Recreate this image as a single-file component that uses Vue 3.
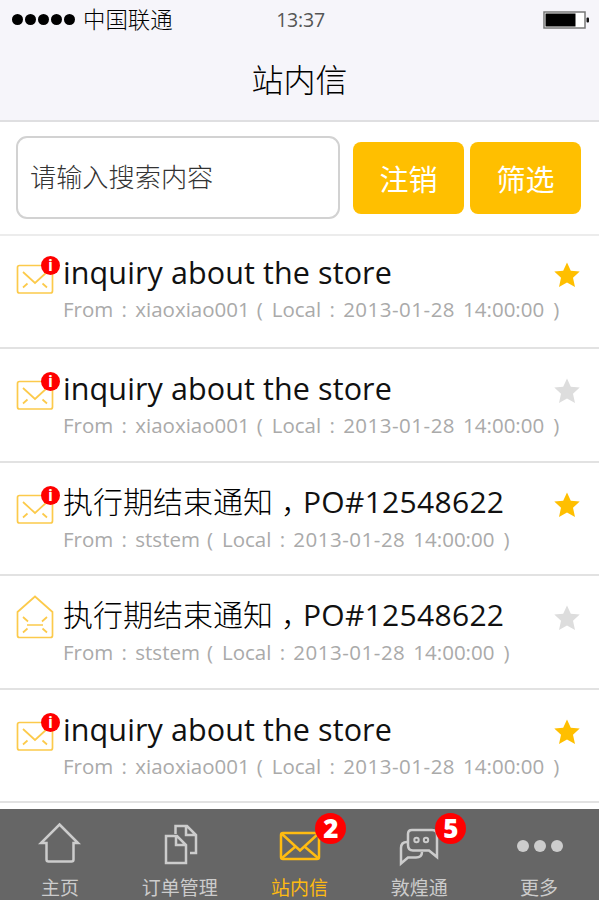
<template>
  <div class="page">
    <header class="header">
      <div class="status-bar">
        <div class="carrier">
          <span class="signal"><i v-for="n in 5" :key="n"></i></span>
          <span>中国联通</span>
        </div>
        <div class="time">13:37</div>
        <svg class="battery" width="46" height="18" viewBox="0 0 46 18">
          <rect x="1" y="1" width="41" height="16" fill="#fff" stroke="#777" stroke-width="1.5" />
          <rect x="2.5" y="2.5" width="30" height="13" fill="#000" />
          <rect x="43.5" y="6.5" width="2.5" height="5" rx="1" fill="#111" />
        </svg>
      </div>
      <h1>站内信</h1>
    </header>

    <div class="search">
      <input v-model="keyword" type="text" placeholder="请输入搜索内容">
      <button class="btn" @click="keyword = ''">注销</button>
      <button class="btn">筛选</button>
    </div>

    <ul class="list">
      <li v-for="(item, index) in messages" :key="index" class="item">
        <div class="mail">
          <svg v-if="item.read" width="38" height="46" viewBox="0 0 38 46">
            <path d="M1.5 14 L19 -1.5 L36.5 14 V37.500 Q36.500 39.500 34.500 39.500 H3.500 Q1.500 39.500 1.500 37.500 Z M7 19 L12 23.500 M31 19 L26 23.500 M11 27 H27 M7 34.500 L11.500 30.500 M31 34.500 L26.500 30.500" />
          </svg>
          <svg v-else width="38" height="46" viewBox="0 0 38 46">
            <rect x="1.500" y="10.500" width="35" height="27.500" rx="2" />
            <path d="M7 17 L19 28 L31 17 M7 32.500 L11.500 28.500 M31 32.500 L26.500 28.500" />
          </svg>
          <span v-if="!item.read" class="mark">i</span>
        </div>
        <div class="text">
          <div v-if="item.order" class="title cn">{{ item.title }}<span class="comma">，</span><span class="order">{{ item.order }}</span></div>
          <div v-else class="title">{{ item.title }}</div>
          <div class="info">
            <span>From</span>
            <span class="colon">:</span>
            <span>{{ item.from }}</span>
            <span class="bracket">(</span>
            <span>Local</span>
            <span class="colon">:</span>
            <span class="date">{{ item.date }}</span>
            <span class="clock">{{ item.clock }}</span>
            <span>)</span>
          </div>
        </div>
        <svg class="star" :class="{ on: item.star }" width="26" height="26" viewBox="0 0 26 26" @click="item.star = !item.star">
          <path d="M13 .5 L16.800 8.700 L25.700 9.600 L19 15.700 L21 25 L13 20.500 L5 25 L7 15.700 L.3 9.600 L9.200 8.700 Z" />
        </svg>
      </li>
    </ul>

    <nav class="tabs">
      <div
          v-for="tab in tabs"
          :key="tab.name"
          class="tab"
          :class="{ active: current === tab.name }"
          @click="current = tab.name"
      >
        <div class="tab-icon">
          <svg width="42" height="44" viewBox="0 0 42 44">
            <path v-for="d in tab.paths" :key="d" :d="d" />
            <circle v-for="c in tab.eyes" :key="c" class="eye" :cx="c" cy="18" r="2.2" />
            <circle v-for="c in tab.dots" :key="c" class="dot" :cx="c" cy="24" r="6" />
          </svg>
          <span v-if="tab.count" class="count">{{ tab.count }}</span>
        </div>
        <span class="tab-name">{{ tab.name }}</span>
      </div>
    </nav>
  </div>
</template>

<script setup>
import { ref } from 'vue'

const keyword = ref('')
const current = ref('站内信')

const time = { date: '2013-01-28', clock: '14:00:00' }

// 消息列表
const messages = ref([
  { title: 'inquiry about the store', from: 'xiaoxiao001', ...time, star: true, read: false },
  { title: 'inquiry about the store', from: 'xiaoxiao001', ...time, star: false, read: false },
  { title: '执行期结束通知', order: 'PO#12548622', from: 'ststem', ...time, star: true, read: false },
  { title: '执行期结束通知', order: 'PO#12548622', from: 'ststem', ...time, star: false, read: true },
  { title: 'inquiry about the store', from: 'xiaoxiao001', ...time, star: true, read: false }
])

// 底部菜单
const tabs = [
  { name: '主页', paths: ['M20.500 2.500 L39 21 H34.500 V37.500 Q34.500 39.500 32.500 39.500 H9.500 Q7.500 39.500 7.500 37.500 V21 H2 Z'] },
  {
    name: '订单管理',
    paths: [
      'M7 14 H18 L27 23 V41 H7 Z M17 14 V23 H27',
      'M16.500 12 V4 H28 L37 13 V31 H31 M27 4 V13 H37'
    ]
  },
  { name: '站内信', count: 2, paths: ['M5 11 H39 Q41 11 41 13 V35 Q41 37 39 37 H5 Q3 37 3 35 V13 Q3 11 5 11 Z', 'M4 12 L22 28.500 L40 12 M4 36 L17.500 24.500 M40 36 L26.500 24.500'] },
  {
    name: '敦煌通',
    count: 5,
    eyes: [18.5, 28],
    paths: [
      'M14 8 H34 Q39 8 39 13 V35 L31 28.500 H15 Q10 28.500 10 23 V12 Q10 8 14 8 Z',
      'M9 20 Q3 20 3 26 V41.500 L10 35.500 H18 Q24 35.500 24 30'
    ]
  },
  { name: '更多', dots: [5, 22, 39], paths: [] }
]
</script>

<style>
body {
  background: #fff;
}
</style>

<style scoped>
.page {
  height: 900px;
  display: flex;
  flex-direction: column;
  overflow: hidden;
  font-family: "Open Sans", "Noto Sans CJK SC", sans-serif;
  background: #fff;
}

.header {
  height: 122px;
  box-sizing: border-box;
  background: #f6f5fa;
  border-bottom: 2px solid #dfdfe1;
}

.status-bar {
  height: 39px;
  padding: 0 10px 0 12px;
  display: grid;
  grid-template-columns: 1fr auto 1fr;
  align-items: center;
  font-size: 22.4px;
  font-weight: 300;
}

.carrier {
  display: flex;
  align-items: center;
  gap: 8px;
  line-height: 36px;
}

.signal {
  display: flex;
  gap: 2px;
}

.signal i {
  width: 11px;
  height: 11px;
  border-radius: 50%;
  background: #000;
}

.time {
  font-size: 19.5px;
  font-weight: 400;
  color: #555;
  letter-spacing: -0.2px;
}

.battery {
  justify-self: end;
}

h1 {
  margin: 0;
  line-height: 81px;
  text-align: center;
  font-size: 32px;
  font-weight: 300;
}

.search {
  height: 114px;
  box-sizing: border-box;
  display: flex;
  align-items: center;
  padding: 0 18px 2px 16px;
  border-bottom: 2px solid #ececec;
}

input {
  width: 324px;
  height: 83px;
  box-sizing: border-box;
  margin-right: 13px;
  padding: 0 12px 3px;
  border: 2px solid #d2d2d2;
  border-radius: 11px;
  outline: none;
  font: 300 26.2px "Noto Sans CJK SC", sans-serif;
}

input::placeholder {
  color: #333;
}

.btn {
  width: 111px;
  height: 72px;
  margin-top: 1px;
  padding: 0;
  border: none;
  border-radius: 8px;
  background: #ffbf00;
  color: #fff;
  font: 400 29px "Noto Sans CJK SC", sans-serif;
}

.btn + .btn {
  margin-left: 6px;
}

.list {
  flex: 1;
  margin: 0;
  padding: 0;
  list-style: none;
}

.item {
  height: 113.5px;
  box-sizing: border-box;
  display: flex;
  align-items: flex-start;
  padding: 22px 19px 0 16px;
  border-bottom: 2px solid #e2e2e2;
}

.item:first-child {
  height: 113px;
  padding-top: 19px;
}

.mail {
  position: relative;
  flex-shrink: 0;
  width: 38px;
  height: 46px;
  margin-right: 9px;
}

.mail svg {
  display: block;
  overflow: visible;
  fill: none;
  stroke: #fcca4b;
  stroke-width: 1.7;
}

.mark {
  position: absolute;
  top: 1px;
  right: -6px;
  width: 19px;
  height: 19px;
  border-radius: 50%;
  background: #f00;
  color: #fff;
  font-size: 16px;
  font-weight: 700;
  line-height: 18px;
  text-align: center;
}

.text {
  flex: 1;
  min-width: 0;
  white-space: nowrap;
}

.title {
  height: 36px;
  line-height: 34px;
  font-size: 30.5px;
  font-weight: 400;
  letter-spacing: 0.1px;
  color: #111;
}

.title.cn {
  font-size: 30px;
  font-weight: 300;
  letter-spacing: 0;
  color: #000;
}

.comma {
  padding-left: 8px;
  letter-spacing: -8px;
}

.order {
  font-weight: 400;
  letter-spacing: 0.3px;
  color: #111;
}

.info {
  display: flex;
  height: 38px;
  line-height: 36px;
  font-size: 20.5px;
  font-weight: 400;
  color: #aaa;
}

.info span {
  flex-shrink: 0;
}

.colon {
  width: 22px;
  text-align: center;
}

.bracket {
  width: 15px;
  padding-left: 7px;
}

.date {
  letter-spacing: 0.5px;
}

.clock {
  margin: 0 9px 0 8px;
}

.star {
  flex-shrink: 0;
  margin-top: 7px;
  fill: #ddd;
}

.star.on {
  fill: #ffbf00;
}

.tabs {
  height: 91px;
  display: grid;
  grid-template-columns: repeat(5, 1fr);
  background: #666;
}

.tab {
  display: flex;
  flex-direction: column;
  align-items: center;
  color: #ccc;
}

.tab.active {
  color: #fb1;
}

.tab-icon {
  position: relative;
  height: 44px;
  margin-top: 13px;
}

.tab-icon svg {
  display: block;
  overflow: visible;
  fill: none;
  stroke: currentColor;
  stroke-width: 2.5;
}

.tab-icon .eye {
  stroke-width: 2;
}

.tab-icon .dot {
  fill: currentColor;
  stroke: none;
}

.count {
  position: absolute;
  top: -9px;
  right: -26px;
  width: 31px;
  height: 31px;
  border-radius: 50%;
  background: #f00;
  color: #fff;
  font-size: 26px;
  font-weight: 800;
  line-height: 31px;
  text-align: center;
}

.tab-name {
  margin-top: 8px;
  font-size: 19px;
  line-height: 28px;
}
</style>
